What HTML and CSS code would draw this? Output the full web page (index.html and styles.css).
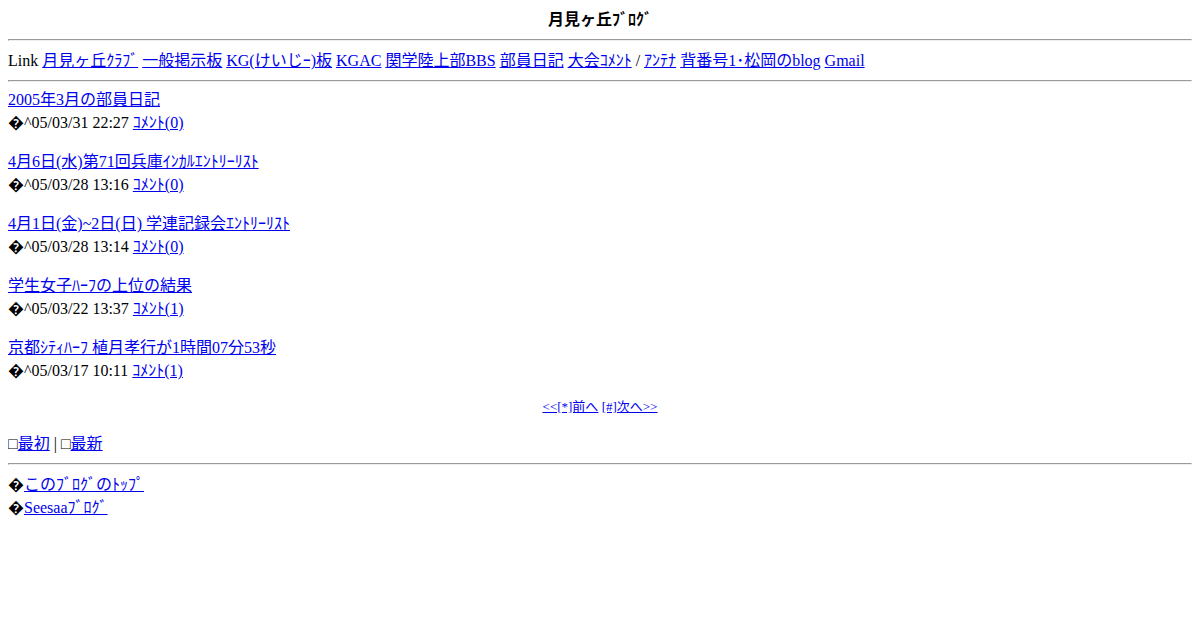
FILE: index.html
```html
<!DOCTYPE html>
<html lang="ja">
<head>
    <meta charset="UTF-8">
    <title>月見ヶ丘ﾌﾞﾛｸﾞ</title>
    <link rel="stylesheet" href="styles.css">
</head>
<body>
<div class="blog-title">月見ヶ丘ﾌﾞﾛｸﾞ</div>
<hr>
<div class="links">Link <a href="#">月見ヶ丘ｸﾗﾌﾞ</a> <a href="#">一般掲示板</a> <a href="#">KG(けいじｰ)板</a> <a href="#">KGAC</a> <a href="#">関学陸上部BBS</a> <a href="#">部員日記</a> <a href="#">大会ｺﾒﾝﾄ</a> / <a href="#">ｱﾝﾃﾅ</a> <a href="#">背番号1･松岡のblog</a> <a href="#">Gmail</a></div>
<hr class="list-top">

<div class="entry">
    <a href="#">2005年3月の部員日記</a><br>
    �^05/03/31 22:27 <a href="#">ｺﾒﾝﾄ(0)</a>
</div>
<div class="entry">
    <a href="#">4月6日(水)第71回兵庫ｲﾝｶﾙｴﾝﾄﾘｰﾘｽﾄ</a><br>
    �^05/03/28 13:16 <a href="#">ｺﾒﾝﾄ(0)</a>
</div>
<div class="entry">
    <a href="#">4月1日(金)~2日(日) 学連記録会ｴﾝﾄﾘｰﾘｽﾄ</a><br>
    �^05/03/28 13:14 <a href="#">ｺﾒﾝﾄ(0)</a>
</div>
<div class="entry">
    <a href="#">学生女子ﾊｰﾌの上位の結果</a><br>
    �^05/03/22 13:37 <a href="#">ｺﾒﾝﾄ(1)</a>
</div>
<div class="entry">
    <a href="#">京都ｼﾃｨﾊｰﾌ 植月孝行が1時間07分53秒</a><br>
    �^05/03/17 10:11 <a href="#">ｺﾒﾝﾄ(1)</a>
</div>

<div class="pager"><a href="#">&lt;&lt;[*]前へ</a> <a href="#">[#]次へ&gt;&gt;</a></div>

<div class="jump">□<a href="#">最初</a> | □<a href="#">最新</a></div>
<hr>
<div class="footer">
    �<a href="#">このﾌﾞﾛｸﾞのﾄｯﾌﾟ</a><br>
    �<a href="#">Seesaaﾌﾞﾛｸﾞ</a>
</div>
</body>
</html>
```

FILE: styles.css
```css
body {
    margin: 8px;
    font-family: "Liberation Serif", "Noto Sans CJK JP", serif;
    font-size: 16px;
    line-height: 23px;
    color: #000;
    background: #fff;
}

a {
    color: #0000ee;
}

.blog-title {
    text-align: center;
    font-weight: bold;
}

hr {
    margin: 8px 0;
}

hr.list-top {
    margin-bottom: 6px;
}

.entry {
    margin-bottom: 16px;
}

.pager {
    text-align: center;
    font-size: 13px;
    line-height: 18px;
    margin-bottom: 16px;
}
```
